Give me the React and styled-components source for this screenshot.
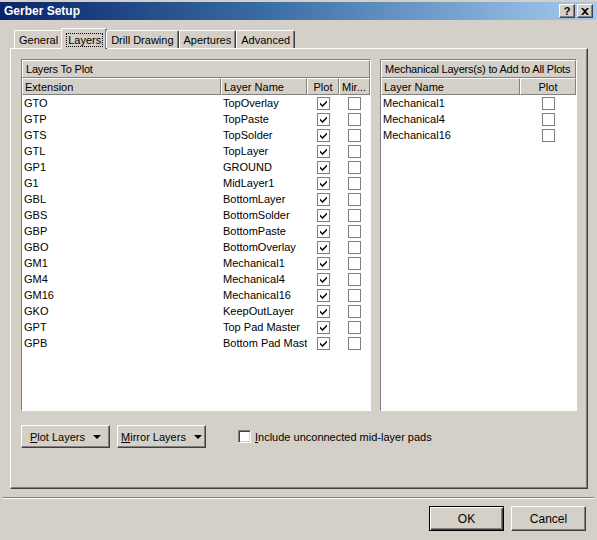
import React from 'react';
import styled, { createGlobalStyle } from 'styled-components';

const GlobalStyle = createGlobalStyle`
    html, body {
        margin: 0;
        padding: 0;
        background: #d4d0c8;
    }
    body {
        font-family: "Liberation Sans", Arial, sans-serif;
        font-size: 11px;
        color: #000000;
    }
`;

const Window = styled.div`
    width: 597px;
    height: 540px;
    box-sizing: border-box;
    padding-top: 2px;
    display: flex;
    flex-direction: column;
    background: #d4d0c8;
    overflow: hidden;
`;

const TitleBar = styled.div`
    height: 18px;
    display: flex;
    align-items: center;
    justify-content: space-between;
    padding: 0 4px 0 4px;
    background: linear-gradient(to right, #0a246a 0%, #3a6ea5 45%, #a6caf0 100%);
`;

const Title = styled.span`
    color: #ffffff;
    font-weight: bold;
    font-size: 12px;
`;

const CaptionButtons = styled.div`
    display: flex;
    gap: 2px;
`;

const CaptionButton = styled.div`
    width: 16px;
    height: 14px;
    box-sizing: border-box;
    display: flex;
    align-items: center;
    justify-content: center;
    background: #d4d0c8;
    border: 1px solid;
    border-color: #ffffff #404040 #404040 #ffffff;
    box-shadow: inset -1px -1px 0 #808080;
    font-weight: bold;
    font-size: 11px;
    line-height: 1;
`;

const TabStrip = styled.div`
    display: flex;
    align-items: flex-end;
    height: 21px;
    margin: 7px 0 0 14px;
    position: relative;
    z-index: 1;
`;

const Tab = styled.div`
    height: ${(p) => (p.$active ? '21px' : '18px')};
    box-sizing: border-box;
    padding: ${(p) => (p.$active ? '1px 4px 0 5px' : '1px 4px 0 4px')};
    margin: ${(p) => (p.$active ? '0 -1px -1px -2px' : '0')};
    display: flex;
    align-items: center;
    background: #d4d0c8;
    border-top: 1px solid #ffffff;
    border-left: 1px solid #ffffff;
    border-right: 1px solid #404040;
    box-shadow: inset -1px 0 0 #808080;
    border-radius: 2px 2px 0 0;
    white-space: nowrap;
    font-size: 11px;
`;

const FocusLabel = styled.span`
    outline: 1px dotted #000000;
    outline-offset: 0;
    padding: 0 1px;
`;

const TabPane = styled.div`
    margin-left: 10px;
    width: 578px;
    height: 441px;
    box-sizing: border-box;
    border: 1px solid;
    border-color: #ffffff #404040 #404040 #ffffff;
    box-shadow: inset -1px -1px 0 #808080;
    padding: 10px 0 0 10px;
    display: flex;
    flex-direction: column;
`;

const Groups = styled.div`
    display: flex;
    gap: 9px;
`;

const ListBox = styled.div`
    width: ${(p) => p.$width}px;
    height: 352px;
    box-sizing: border-box;
    border: 1px solid;
    border-color: #808080 #ffffff #ffffff #808080;
    background: #ffffff;
    display: flex;
    flex-direction: column;
`;

const GroupHeader = styled.div`
    height: 18px;
    box-sizing: border-box;
    display: flex;
    align-items: center;
    padding-left: 3px;
    background: #d4d0c8;
    border: 1px solid;
    border-color: #ffffff #808080 #808080 #ffffff;
    white-space: nowrap;
    letter-spacing: -0.2px;
`;

const Grid = styled.div`
    display: grid;
    grid-template-columns: ${(p) => p.$cols};
`;

const HeadCell = styled.div`
    height: 17px;
    box-sizing: border-box;
    display: flex;
    align-items: center;
    justify-content: ${(p) => (p.$center ? 'center' : 'flex-start')};
    padding-left: ${(p) => (p.$center ? '0' : '2px')};
    background: #d4d0c8;
    border-top: 1px solid #ffffff;
    border-left: 1px solid #ffffff;
    border-bottom: 1px solid #808080;
    border-right: 1px solid #808080;
    white-space: nowrap;
    overflow: hidden;
`;

const Cell = styled.div`
    height: 16px;
    display: flex;
    align-items: center;
    justify-content: ${(p) => (p.$center ? 'center' : 'flex-start')};
    padding-left: ${(p) => (p.$center ? '0' : '2px')};
    white-space: nowrap;
    overflow: hidden;
`;

const Box = styled.div`
    width: 13px;
    height: 13px;
    box-sizing: border-box;
    border: 1px solid #808080;
    background: #ffffff;
    display: flex;
    align-items: center;
    justify-content: center;
    flex-shrink: 0;
`;

const SunkenBox = styled(Box)`
    border-color: #808080 #ffffff #ffffff #808080;
    box-shadow: inset 1px 1px 0 #404040, inset -1px -1px 0 #d4d0c8;
`;

const ButtonRow = styled.div`
    display: flex;
    align-items: center;
    margin-top: 14px;
`;

const PushButton = styled.div`
    width: ${(p) => p.$width}px;
    height: ${(p) => p.$height || 23}px;
    box-sizing: border-box;
    display: flex;
    align-items: center;
    justify-content: center;
    gap: 8px;
    background: #d4d0c8;
    border: 1px solid;
    border-color: ${(p) => (p.$default ? '#000000' : '#ffffff #404040 #404040 #ffffff')};
    box-shadow: ${(p) =>
        p.$default
            ? 'inset 1px 1px 0 #ffffff, inset -1px -1px 0 #404040, inset -2px -2px 0 #808080'
            : 'inset -1px -1px 0 #808080'};
    margin-right: ${(p) => p.$gap || 0}px;
    font-size: ${(p) => p.$size || 11}px;
`;

const Arrow = styled.span`
    width: 0;
    height: 0;
    border-left: 4px solid transparent;
    border-right: 4px solid transparent;
    border-top: 4px solid #000000;
`;

const CheckLabel = styled.label`
    display: flex;
    align-items: center;
    gap: 4px;
    margin-left: 32px;
    font-size: 11px;
`;

const Separator = styled.div`
    margin: 8px 3px 0 3px;
    border-top: 1px solid #808080;
    border-bottom: 1px solid #ffffff;
`;

const Footer = styled.div`
    display: flex;
    justify-content: flex-end;
    gap: 7px;
    margin: 7px 11px 0 0;
`;

const Check = () => (
    <svg width="9" height="9" viewBox="0 0 9 9">
        <path d="M1 3.5 L3.5 6 L8 1.5 L8 3.5 L3.5 8 L1 5.5 Z" fill="#000000" />
    </svg>
);

const plotLayers = [
    ['GTO', 'TopOverlay'],
    ['GTP', 'TopPaste'],
    ['GTS', 'TopSolder'],
    ['GTL', 'TopLayer'],
    ['GP1', 'GROUND'],
    ['G1', 'MidLayer1'],
    ['GBL', 'BottomLayer'],
    ['GBS', 'BottomSolder'],
    ['GBP', 'BottomPaste'],
    ['GBO', 'BottomOverlay'],
    ['GM1', 'Mechanical1'],
    ['GM4', 'Mechanical4'],
    ['GM16', 'Mechanical16'],
    ['GKO', 'KeepOutLayer'],
    ['GPT', 'Top Pad Master'],
    ['GPB', 'Bottom Pad Master'],
];

const mechLayers = ['Mechanical1', 'Mechanical4', 'Mechanical16'];

const tabs = ['General', 'Layers', 'Drill Drawing', 'Apertures', 'Advanced'];

const App = () => {
    return (
        <>
            <GlobalStyle />
            <Window>
                <TitleBar>
                    <Title>Gerber Setup</Title>
                    <CaptionButtons>
                        <CaptionButton>?</CaptionButton>
                        <CaptionButton>
                            <svg width="8" height="7" viewBox="0 0 8 7">
                                <path d="M0 0 L2 0 L4 2 L6 0 L8 0 L5 3.5 L8 7 L6 7 L4 5 L2 7 L0 7 L3 3.5 Z" fill="#000" />
                            </svg>
                        </CaptionButton>
                    </CaptionButtons>
                </TitleBar>

                <TabStrip>
                    {tabs.map((t) => (
                        <Tab key={t} $active={t === 'Layers'}>
                            {t === 'Layers' ? <FocusLabel>{t}</FocusLabel> : t}
                        </Tab>
                    ))}
                </TabStrip>

                <TabPane>
                    <Groups>
                        <ListBox $width={350}>
                            <GroupHeader>Layers To Plot</GroupHeader>
                            <Grid $cols="199px 86px 32px 1fr">
                                <HeadCell>Extension</HeadCell>
                                <HeadCell>Layer Name</HeadCell>
                                <HeadCell $center>Plot</HeadCell>
                                <HeadCell>Mir...</HeadCell>
                                {plotLayers.map(([ext, name]) => (
                                    <React.Fragment key={ext}>
                                        <Cell>{ext}</Cell>
                                        <Cell>{name}</Cell>
                                        <Cell $center>
                                            <Box>
                                                <Check />
                                            </Box>
                                        </Cell>
                                        <Cell $center>
                                            <Box />
                                        </Cell>
                                    </React.Fragment>
                                ))}
                            </Grid>
                        </ListBox>

                        <ListBox $width={197}>
                            <GroupHeader>Mechanical Layers(s) to Add to All Plots</GroupHeader>
                            <Grid $cols="139px 1fr">
                                <HeadCell>Layer Name</HeadCell>
                                <HeadCell $center>Plot</HeadCell>
                                {mechLayers.map((name) => (
                                    <React.Fragment key={name}>
                                        <Cell>{name}</Cell>
                                        <Cell $center>
                                            <Box />
                                        </Cell>
                                    </React.Fragment>
                                ))}
                            </Grid>
                        </ListBox>
                    </Groups>

                    <ButtonRow>
                        <PushButton $width={89} $gap={7}>
                            <span>
                                <u>P</u>lot Layers
                            </span>
                            <Arrow />
                        </PushButton>
                        <PushButton $width={89}>
                            <span>
                                <u>M</u>irror Layers
                            </span>
                            <Arrow />
                        </PushButton>
                        <CheckLabel>
                            <SunkenBox />
                            <span>
                                <u>I</u>nclude unconnected mid-layer pads
                            </span>
                        </CheckLabel>
                    </ButtonRow>
                </TabPane>

                <Separator />

                <Footer>
                    <PushButton $width={75} $height={25} $size={12} $default>
                        OK
                    </PushButton>
                    <PushButton $width={75} $height={25} $size={12}>
                        Cancel
                    </PushButton>
                </Footer>
            </Window>
        </>
    );
};

export default App;
